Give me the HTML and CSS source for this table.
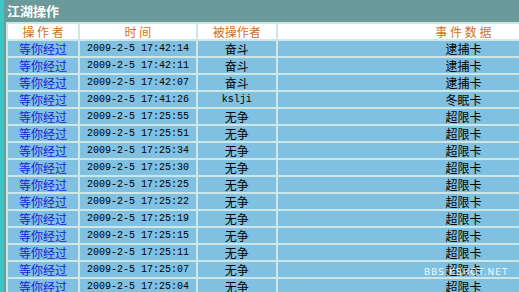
FILE: index.html
```html
<!DOCTYPE html>
<html>
<head>
<meta charset="utf-8">
<link rel="stylesheet" href="styles.css">
</head>
<body>
<div class="frame">
  <div class="strip"></div>
  <div class="panel">
    <div class="title">江湖操作</div>
    <table class="log">
      <tr class="head"><th class="c1">操 作 者</th><th class="c2">时 间</th><th class="c3">被操作者</th><th class="c4">事 件 数 据</th></tr>
      <tr><td class="c1">等你经过</td><td class="c2 t">2009-2-5 17:42:14</td><td class="c3">奋斗</td><td class="c4">逮捕卡</td></tr>
      <tr><td class="c1">等你经过</td><td class="c2 t">2009-2-5 17:42:11</td><td class="c3">奋斗</td><td class="c4">逮捕卡</td></tr>
      <tr><td class="c1">等你经过</td><td class="c2 t">2009-2-5 17:42:07</td><td class="c3">奋斗</td><td class="c4">逮捕卡</td></tr>
      <tr><td class="c1">等你经过</td><td class="c2 t">2009-2-5 17:41:26</td><td class="c3 t">kslji</td><td class="c4">冬眠卡</td></tr>
      <tr><td class="c1">等你经过</td><td class="c2 t">2009-2-5 17:25:55</td><td class="c3">无争</td><td class="c4">超限卡</td></tr>
      <tr><td class="c1">等你经过</td><td class="c2 t">2009-2-5 17:25:51</td><td class="c3">无争</td><td class="c4">超限卡</td></tr>
      <tr><td class="c1">等你经过</td><td class="c2 t">2009-2-5 17:25:34</td><td class="c3">无争</td><td class="c4">超限卡</td></tr>
      <tr><td class="c1">等你经过</td><td class="c2 t">2009-2-5 17:25:30</td><td class="c3">无争</td><td class="c4">超限卡</td></tr>
      <tr><td class="c1">等你经过</td><td class="c2 t">2009-2-5 17:25:25</td><td class="c3">无争</td><td class="c4">超限卡</td></tr>
      <tr><td class="c1">等你经过</td><td class="c2 t">2009-2-5 17:25:22</td><td class="c3">无争</td><td class="c4">超限卡</td></tr>
      <tr><td class="c1">等你经过</td><td class="c2 t">2009-2-5 17:25:19</td><td class="c3">无争</td><td class="c4">超限卡</td></tr>
      <tr><td class="c1">等你经过</td><td class="c2 t">2009-2-5 17:25:15</td><td class="c3">无争</td><td class="c4">超限卡</td></tr>
      <tr><td class="c1">等你经过</td><td class="c2 t">2009-2-5 17:25:11</td><td class="c3">无争</td><td class="c4">超限卡</td></tr>
      <tr><td class="c1">等你经过</td><td class="c2 t">2009-2-5 17:25:07</td><td class="c3">无争</td><td class="c4">超限卡</td></tr>
      <tr><td class="c1">等你经过</td><td class="c2 t">2009-2-5 17:25:04</td><td class="c3">无争</td><td class="c4">超限卡</td></tr>
    </table>
  </div>
  <div class="mark">BBS.KSHOT.NET</div>
</div>
</body>
</html>
```
FILE: styles.css
```css
html, body {
  margin: 0;
  padding: 0;
  width: 519px;
  height: 292px;
  overflow: hidden;
  background: #6a9a9a;
}
.frame {
  position: relative;
  display: flex;
  width: 519px;
  height: 292px;
  overflow: hidden;
}
.strip {
  width: 4px;
  flex: none;
  background: #3cc6c6;
}
.panel {
  flex: none;
  padding-left: 2px;
}
.title {
  height: 22px;
  line-height: 22px;
  padding-left: 1px;
  color: #ffffff;
  font-weight: bold;
  font-size: 13px;
  font-family: "Noto Sans CJK SC", sans-serif;
}
.log {
  border-collapse: separate;
  border-spacing: 2px;
  background: #cfe6e6;
  width: 645px;
  table-layout: fixed;
  font-family: "Noto Sans CJK SC", sans-serif;
  font-size: 12px;
}
.log th, .log td {
  padding: 0;
  height: 15px;
  line-height: 15px;
  text-align: center;
  white-space: nowrap;
  overflow: hidden;
}
.log th {
  background: #ffffff;
  color: #d2701e;
  font-weight: normal;
  height: 15px;
}
.log td {
  background: #80c0e0;
  color: #000000;
}
.log td.c1 {
  color: #1a22d8;
}
.log .c1 { width: 70px; }
.log .c2 { width: 115px; }
.log .c3 { width: 78px; }
.log .c4 { width: 370px; }
.log td.t {
  font-family: "Liberation Mono", monospace;
  font-size: 10px;
}
.mark {
  position: absolute;
  left: 424px;
  top: 267px;
  color: #ffffff;
  font-family: "DejaVu Sans", sans-serif;
  font-size: 9px;
  letter-spacing: 1px;
  opacity: 0.9;
}
```
